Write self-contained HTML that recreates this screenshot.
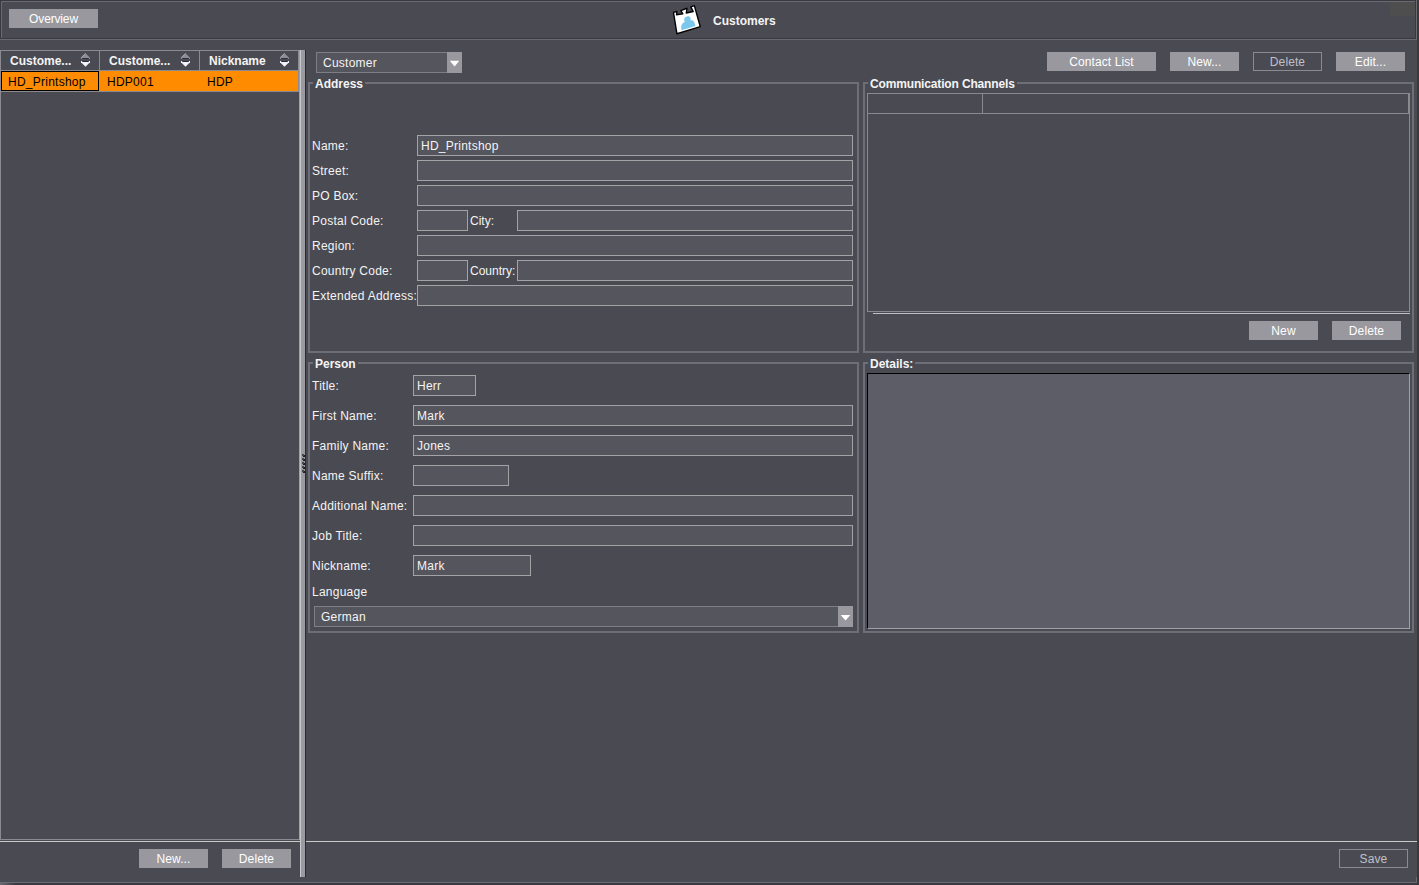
<!DOCTYPE html>
<html><head><meta charset="utf-8">
<style>
*{margin:0;padding:0;box-sizing:border-box}
html,body{width:1419px;height:885px;overflow:hidden;background:#4a4a52;font-family:"Liberation Sans",sans-serif;font-size:12px;color:#f4f4f4;letter-spacing:0.25px}
.gt,b{letter-spacing:0}
.a{position:absolute}
.ln{position:absolute}
.btn{position:absolute;background:#98989e;color:#fff;text-align:center;height:19px;line-height:19px;padding-top:1px;letter-spacing:0.1px}
.btnd{position:absolute;border:1px solid #8a8a92;color:#c0c0c8;text-align:center;height:19px;line-height:17px;padding-top:1px;letter-spacing:0.1px}
.fld{position:absolute;background:#55555d;border:1px solid #a3a3a6;height:21px;line-height:19px;padding-left:3px;padding-top:1px}
.lbl{position:absolute;line-height:14px}
.gb{position:absolute;border:2px solid #6e6e76}
.gt{position:absolute;font-weight:bold;background:#4a4a52;padding:0 2px;line-height:14px}
</style></head><body>

<!-- window right strip -->
<div class="a" style="left:1417px;top:0;width:2px;height:885px;background:#38383d"></div>

<!-- top bar etched border -->
<div class="a" style="left:0;top:0;width:1417px;height:1px;background:#38383e"></div>
<div class="a" style="left:0;top:0;width:1px;height:40px;background:#38383e"></div>
<div class="a" style="left:1px;top:1px;width:1415px;height:1px;background:#6a6a72"></div>
<div class="a" style="left:1px;top:1px;width:1px;height:38px;background:#6a6a72"></div>
<div class="a" style="left:1px;top:38px;width:1415px;height:1px;background:#38383e"></div>
<div class="a" style="left:1415px;top:1px;width:1px;height:38px;background:#38383e"></div>
<div class="a" style="left:0;top:39px;width:1417px;height:1px;background:#6a6a72"></div>
<div class="a" style="left:1416px;top:0;width:1px;height:40px;background:#6a6a72"></div>
<div class="a" style="left:1390px;top:2px;width:25px;height:14px;background:#4e4e4f"></div>

<div class="btn" style="left:9px;top:9px;width:89px;letter-spacing:-0.15px">Overview</div>

<!-- title icon -->
<svg class="a" style="left:660px;top:0" width="50" height="40" viewBox="660 0 50 40">
 <g transform="matrix(0.965,-0.292,0.211,0.989,672.6,12.5)">
  <path d="M0.9,0.1 L4.4,0.3 L3.3,3.3 L9.7,4.3 L8.4,0.5 L14.9,0.1 L13.2,4.4 L20.3,5 L18.9,-0.1 L22.6,-0.2 L24,21.4 L-0.2,21.4 Z" fill="#fff" stroke="#000" stroke-width="1.35" stroke-linejoin="round"/>
  <path d="M5,19.5 C5,14.5 7,12.8 10.3,12.5 C9.2,11.4 9.4,7.8 13,7.8 C16.6,7.8 16.8,11.4 15.7,12.5 C18.5,12.8 19.5,14.5 19.5,19.5 Z" fill="#7cc8ec"/>
 </g>
</svg>
<div class="a" style="left:713px;top:14px;font-weight:bold;line-height:14px;letter-spacing:0">Customers</div>

<!-- LEFT TABLE -->
<div class="a" style="left:0;top:50px;width:300px;height:1px;background:#8a8a90"></div>
<div class="a" style="left:0;top:50px;width:1px;height:790px;background:#8a8a90"></div>
<div class="a" style="left:0;top:70px;width:299px;height:1px;background:#8a8a90"></div>
<div class="a" style="left:0;top:839px;width:300px;height:1px;background:#8a8a90"></div>
<div class="a" style="left:99px;top:50px;width:1px;height:41px;background:#8a8a90"></div>
<div class="a" style="left:199px;top:50px;width:1px;height:41px;background:#8a8a90"></div>
<div class="a" style="left:1px;top:71px;width:297px;height:20px;background:#ff8c00"></div>
<div class="a" style="left:298px;top:50px;width:1px;height:42px;background:#8a8a94"></div>
<div class="a" style="left:1px;top:91px;width:297px;height:1px;background:#8a8a90"></div>
<div class="a" style="left:1px;top:71px;width:98px;height:20px;border:1px solid #000"></div>
<div class="a" style="left:10px;top:54px;font-weight:bold;line-height:14px;letter-spacing:0">Custome...</div>
<div class="a" style="left:109px;top:54px;font-weight:bold;line-height:14px;letter-spacing:0">Custome...</div>
<div class="a" style="left:209px;top:54px;font-weight:bold;line-height:14px;letter-spacing:0">Nickname</div>
<div class="a" style="left:8px;top:75px;color:#000;line-height:14px">HD_Printshop</div>
<div class="a" style="left:107px;top:75px;color:#000;line-height:14px">HDP001</div>
<div class="a" style="left:207px;top:75px;color:#000;line-height:14px">HDP</div>

<!-- splitter -->
<div class="a" style="left:299px;top:50px;width:1px;height:790px;background:#a0a0a6"></div>
<div class="a" style="left:300px;top:50px;width:1px;height:827px;background:#c8c8cc"></div>
<div class="a" style="left:301px;top:50px;width:4px;height:827px;background:#9a9aa0"></div>
<div class="a" style="left:305px;top:50px;width:1px;height:827px;background:#2a2a30"></div>

<!-- bottom bars -->
<div class="a" style="left:0;top:841px;width:300px;height:1px;background:#c8c8c8"></div>
<div class="a" style="left:306px;top:841px;width:1111px;height:1px;background:#c8c8c8"></div>
<div class="btn" style="left:139px;top:849px;width:69px">New...</div>
<div class="btn" style="left:222px;top:849px;width:69px">Delete</div>
<div class="btnd" style="left:1339px;top:849px;width:69px">Save</div>
<div class="a" style="left:0;top:882px;width:1417px;height:1px;background:#6a6a72"></div>
<div class="a" style="left:0;top:883px;width:1417px;height:2px;background:#38383e"></div>

<!-- RIGHT CONTENT -->
<div class="fld" style="left:316px;top:52px;width:146px;height:21px;padding-left:6px;border-color:#7e7e86">Customer</div>
<div class="a" style="left:447px;top:52px;width:15px;height:21px;background:#98989e"></div>

<div class="btn" style="left:1047px;top:52px;width:109px">Contact List</div>
<div class="btn" style="left:1170px;top:52px;width:69px">New...</div>
<div class="btnd" style="left:1253px;top:52px;width:69px">Delete</div>
<div class="btn" style="left:1336px;top:52px;width:69px">Edit...</div>

<!-- Address group -->
<div class="gb" style="left:308px;top:82px;width:551px;height:271px"></div>
<div class="gt" style="left:313px;top:77px">Address</div>

<!-- Comm group -->
<div class="gb" style="left:863px;top:82px;width:551px;height:271px"></div>
<div class="gt" style="left:868px;top:77px;letter-spacing:-0.15px">Communication Channels</div>

<!-- Person group -->
<div class="gb" style="left:308px;top:362px;width:551px;height:271px"></div>
<div class="gt" style="left:313px;top:357px">Person</div>

<!-- Details group -->
<div class="gb" style="left:863px;top:362px;width:551px;height:271px"></div>
<div class="gt" style="left:868px;top:357px">Details:</div>

<!-- address fields -->
<div class="lbl" style="left:312px;top:139px">Name:</div>
<div class="fld" style="left:417px;top:135px;width:436px;padding-left:3px">HD_Printshop</div>
<div class="lbl" style="left:312px;top:164px">Street:</div>
<div class="fld" style="left:417px;top:160px;width:436px;padding-left:3px"></div>
<div class="lbl" style="left:312px;top:189px">PO Box:</div>
<div class="fld" style="left:417px;top:185px;width:436px;padding-left:3px"></div>
<div class="lbl" style="left:312px;top:214px">Postal Code:</div>
<div class="fld" style="left:417px;top:210px;width:51px;padding-left:3px"></div>
<div class="lbl" style="left:470px;top:214px;letter-spacing:0">City:</div>
<div class="fld" style="left:517px;top:210px;width:336px;padding-left:3px"></div>
<div class="lbl" style="left:312px;top:239px">Region:</div>
<div class="fld" style="left:417px;top:235px;width:436px;padding-left:3px"></div>
<div class="lbl" style="left:312px;top:264px">Country Code:</div>
<div class="fld" style="left:417px;top:260px;width:51px;padding-left:3px"></div>
<div class="lbl" style="left:470px;top:264px;letter-spacing:0">Country:</div>
<div class="fld" style="left:517px;top:260px;width:336px;padding-left:3px"></div>
<div class="lbl" style="left:312px;top:289px">Extended Address:</div>
<div class="fld" style="left:417px;top:285px;width:436px;padding-left:3px"></div>
<!-- person fields -->
<div class="lbl" style="left:312px;top:379px">Title:</div>
<div class="fld" style="left:413px;top:375px;width:63px;padding-left:3px">Herr</div>
<div class="lbl" style="left:312px;top:409px">First Name:</div>
<div class="fld" style="left:413px;top:405px;width:440px;padding-left:3px">Mark</div>
<div class="lbl" style="left:312px;top:439px">Family Name:</div>
<div class="fld" style="left:413px;top:435px;width:440px;padding-left:3px">Jones</div>
<div class="lbl" style="left:312px;top:469px">Name Suffix:</div>
<div class="fld" style="left:413px;top:465px;width:96px;padding-left:3px"></div>
<div class="lbl" style="left:312px;top:499px">Additional Name:</div>
<div class="fld" style="left:413px;top:495px;width:440px;padding-left:3px"></div>
<div class="lbl" style="left:312px;top:529px">Job Title:</div>
<div class="fld" style="left:413px;top:525px;width:440px;padding-left:3px"></div>
<div class="lbl" style="left:312px;top:559px">Nickname:</div>
<div class="fld" style="left:413px;top:555px;width:118px;padding-left:3px">Mark</div>
<div class="lbl" style="left:312px;top:585px">Language</div>
<div class="fld" style="left:314px;top:606px;width:539px;padding-left:6px;border-color:#7e7e86">German</div>
<div class="a" style="left:838px;top:606px;width:15px;height:21px;background:#98989e"></div>
<!-- comm table -->
<div class="a" style="left:867px;top:93px;width:543px;height:219px;border:1px solid #8a8a8e"></div>
<div class="a" style="left:868px;top:113px;width:541px;height:1px;background:#8a8a8e"></div>
<div class="a" style="left:982px;top:94px;width:1px;height:19px;background:#8a8a8e"></div>
<div class="a" style="left:1408px;top:94px;width:1px;height:19px;background:#8a8a8e"></div>
<div class="a" style="left:873px;top:313px;width:537px;height:1px;background:#c0c0c4"></div>
<div class="btn" style="left:1249px;top:321px;width:69px">New</div>
<div class="btn" style="left:1332px;top:321px;width:69px">Delete</div>
<!-- details textarea -->
<div class="a" style="left:867px;top:373px;width:543px;height:256px;background:#5d5d67;border-top:1px solid #000;border-left:1px solid #000;border-bottom:1px solid #a0a0a6;border-right:1px solid #a0a0a6"></div>
<!-- sort icons -->
<svg class="a" style="left:0;top:50px" width="300" height="20" viewBox="0 50 300 20">
 <defs><g id="srt"><polygon points="0,59 0,57.7 4.5,53.2 9,57.7 9,59" fill="#8d8d95"/><polyline points="0.3,57.6 4.5,53.4" stroke="#c0c0d0" stroke-width="0.7" fill="none"/><rect x="1.2" y="58" width="6.6" height="1" fill="#2c2c32"/><rect x="1.2" y="61" width="6.6" height="1" fill="#2c2c32"/><polygon points="0,61 9,61 9,62.3 4.5,66.8 0,62.3" fill="#f2f2ff"/><rect x="1.2" y="61" width="6.6" height="1" fill="#2c2c32"/></g></defs>
 <use href="#srt" x="81"/><use href="#srt" x="181"/><use href="#srt" x="280"/>
</svg>
<!-- combo arrows -->
<svg class="a" style="left:447px;top:53px" width="15" height="19"><polygon points="2.8,7.8 12.3,7.8 7.55,13.4" fill="#fff"/></svg>
<svg class="a" style="left:838px;top:606px" width="15" height="21"><polygon points="2.7,8.9 12.3,8.9 7.5,14.4" fill="#fff"/></svg>
<!-- splitter dots -->
<svg class="a" style="left:300px;top:450px" width="6" height="26"><rect x="2" y="4" width="2" height="2" fill="#45454d"/><rect x="4" y="5" width="1" height="2" fill="#1e1e22"/><rect x="3" y="6" width="1" height="1" fill="#1e1e22"/><rect x="2" y="8" width="2" height="2" fill="#45454d"/><rect x="4" y="9" width="1" height="2" fill="#1e1e22"/><rect x="3" y="10" width="1" height="1" fill="#1e1e22"/><rect x="2" y="12" width="2" height="2" fill="#45454d"/><rect x="4" y="13" width="1" height="2" fill="#1e1e22"/><rect x="3" y="14" width="1" height="1" fill="#1e1e22"/><rect x="2" y="16" width="2" height="2" fill="#45454d"/><rect x="4" y="17" width="1" height="2" fill="#1e1e22"/><rect x="3" y="18" width="1" height="1" fill="#1e1e22"/><rect x="2" y="20" width="2" height="2" fill="#45454d"/><rect x="4" y="21" width="1" height="2" fill="#1e1e22"/><rect x="3" y="22" width="1" height="1" fill="#1e1e22"/></svg>
<div class="a" style="left:1416px;top:877px;width:1px;height:6px;background:#6a6a72"></div>
<div class="a" style="left:0;top:883px;width:16px;height:2px;background:linear-gradient(to right,#6a6a70,#38383e)"></div>
</body></html>
